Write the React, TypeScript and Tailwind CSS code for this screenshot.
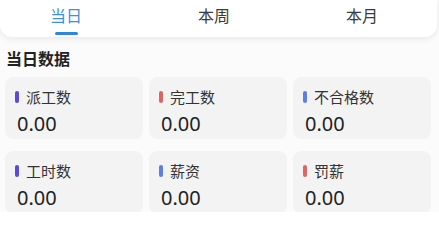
import React from "react";

const items = [
  { label: "派工数", color: "bg-[#5a4ad6]" },
  { label: "完工数", color: "bg-[#e06464]" },
  { label: "不合格数", color: "bg-[#5b7fe3]" },
  { label: "工时数", color: "bg-[#5a4ad6]" },
  { label: "薪资", color: "bg-[#5b7fe3]" },
  { label: "罚薪", color: "bg-[#e06464]" },
];

export default function App() {
  return (
    <div
      className="w-[439px] h-[212px] overflow-hidden bg-[#fbfbfb]"
      style={{ fontFamily: '"Noto Sans CJK SC", "Noto Sans", sans-serif' }}
    >
      <div className="h-[37px] bg-white rounded-b-[12px] shadow-[0_2px_6px_rgba(0,0,0,0.08)] flex justify-between pl-[50px] pr-[59px] mr-[2px]">
        <div className="relative flex flex-col items-center">
          <span className="text-[16px] leading-[30px] text-[#3d8fdc]">当日</span>
          <span className="absolute top-[32px] w-[23px] h-[3px] rounded-full bg-[#2f86e0]" />
        </div>
        <span className="text-[16px] leading-[30px] text-[#3a3a3a]">本周</span>
        <span className="text-[16px] leading-[30px] text-[#3a3a3a]">本月</span>
      </div>
      <div className="pl-[6px] pt-[9px] text-[16px] font-bold leading-[24px] text-[#222]">当日数据</div>
      <div className="grid grid-cols-[138px_138px_138px] gap-x-[6px] gap-y-[12px] pl-[5px] pt-[7px]">
        {items.map((it) => (
          <div key={it.label} className="h-[62px] rounded-[8px] bg-[#f3f3f3] pl-[10px] pt-[9px]">
            <div className="flex items-center gap-[7px]">
              <span className={`w-[4px] h-[12px] rounded-full ${it.color}`} />
              <span className="text-[15px] leading-[22px] text-[#333]">{it.label}</span>
            </div>
            <div className="pl-[2px] pt-[3px] text-[20px] leading-[26px] text-[#222]" style={{ fontFamily: '"Noto Sans", sans-serif' }}>
              0.00
            </div>
          </div>
        ))}
      </div>
    </div>
  );
}
